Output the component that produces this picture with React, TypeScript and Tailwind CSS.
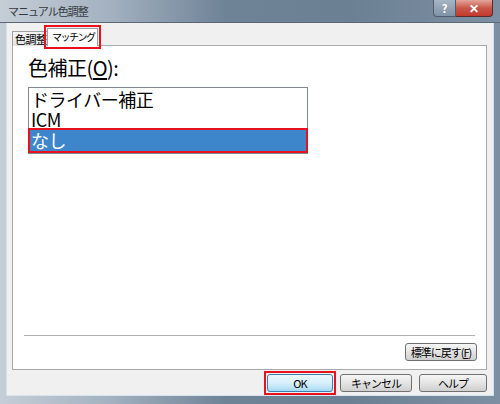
import React from 'react'

const jp = { fontFamily: '"Noto Sans CJK JP", "Noto Sans", sans-serif' }

function WinButton({
  children,
  width,
  primary = false,
}: {
  children: React.ReactNode
  width: string
  primary?: boolean
}) {
  return (
    <div
      className={`${width} h-[18px] flex items-center justify-center rounded-[3px] border text-[11px] leading-none tracking-[-1px] text-black ${
        primary
          ? 'border-[#3c7fb1] bg-gradient-to-b from-[#eaf6fd] via-[#d9f0fc] to-[#a7d9f5]'
          : 'border-[#707070] bg-gradient-to-b from-[#f6f6f6] via-[#e4e4e4] to-[#cfcfcf]'
      }`}
    >
      {children}
    </div>
  )
}

export default function App() {
  return (
    <div
      style={jp}
      className="w-[500px] h-[404px] flex flex-col overflow-hidden bg-[linear-gradient(to_right,#c5ced7_0%,#a3b1c0_22%,#6f8397_45%,#6c8094_70%,#7d90a3_100%)]"
    >
      {/* Title bar */}
      <div className="h-[23px] flex items-start shrink-0 border-b border-[#5a6878]">
        <div className="pl-[8px] pt-[3px] text-[11px] leading-[16px] tracking-[-1px] text-[#34393f]">
          マニュアル色調整
        </div>
        <div className="ml-auto mr-[7px] flex">
          <div className="w-[23px] h-[17px] flex items-center justify-center rounded-bl-[4px] border border-t-0 border-[#4f5d6c] bg-gradient-to-b from-[#a7b5c3] to-[#7f92a6] text-[11px] font-bold leading-none text-white">
            ?
          </div>
          <div className="w-[37px] h-[17px] flex items-center justify-center rounded-br-[4px] border border-l-0 border-t-0 border-[#5a2b2b] bg-gradient-to-b from-[#e3a49a] via-[#c8564a] to-[#c2392b] text-[12px] font-bold leading-none text-white">
            ✕
          </div>
        </div>
      </div>

      {/* Client area */}
      <div className="flex-1 ml-[6px] mr-[6px] mb-[8px] border-l border-r border-b border-[#d6e2ee] bg-[#f0f0f0] flex flex-col pl-[5px] pr-[6px]">
        {/* Tabs */}
        <div className="h-[22px] flex items-end shrink-0 relative z-10">
          <div className="w-[37px] h-[15px] -mb-px overflow-hidden border border-b-0 border-[#a0a0a0] bg-gradient-to-b from-[#f4f4f4] to-[#e2e2e2] pl-[2px] text-[11px] leading-[14px] tracking-[-0.5px] text-black whitespace-nowrap">
            色調整
          </div>
          <div className="-ml-[2px] w-[51px] h-[18px] -mb-px border border-b-0 border-[#a0a0a0] bg-white pl-[4px] text-[10px] leading-[16px] tracking-[-1.5px] text-black outline-2 outline-offset-1 outline-[#e8121e] whitespace-nowrap">
            マッチング
          </div>
        </div>

        {/* Tab panel */}
        <div className="flex-1 bg-white border border-[#a9a9a9] flex flex-col">
          <div className="pl-[15px] pt-[9px] text-[20px] leading-[26px] tracking-[-0.5px] text-black">
            色補正(<span className="underline underline-offset-2">O</span>):
          </div>
          <div className="ml-[15px] mt-[6px] w-[280px] h-[67px] border border-[#828790] bg-white flex flex-col pt-[1px] px-[1px] text-[18px] leading-[20px] tracking-[-0.5px] text-black">
            <div className="h-[20px] pl-[1px]">ドライバー補正</div>
            <div className="h-[20px] pl-[1px]">ICM</div>
            <div className="h-[21px] mt-[1px] bg-[#3d86cb] text-white pl-[1px] outline-2 outline-offset-0 outline-[#e8121e]">
              なし
            </div>
          </div>

          <div className="flex-1" />

          <div className="mx-[11px] h-px bg-[#b0b0b0]" />
          <div className="flex justify-end pr-[9px] pt-[7px] pb-[8px]">
            <WinButton width="w-[72px]">
              標準に戻す(<span className="underline">F</span>)
            </WinButton>
          </div>
        </div>

        {/* Dialog buttons */}
        <div className="h-[25px] shrink-0 flex items-start justify-end gap-[7px] pt-[4px]">
          <div className="outline-2 outline-offset-1 outline-[#e8121e]">
            <WinButton width="w-[66px]" primary>
              OK
            </WinButton>
          </div>
          <WinButton width="w-[72px]">キャンセル</WinButton>
          <WinButton width="w-[68px]">ヘルプ</WinButton>
        </div>
      </div>
    </div>
  )
}
